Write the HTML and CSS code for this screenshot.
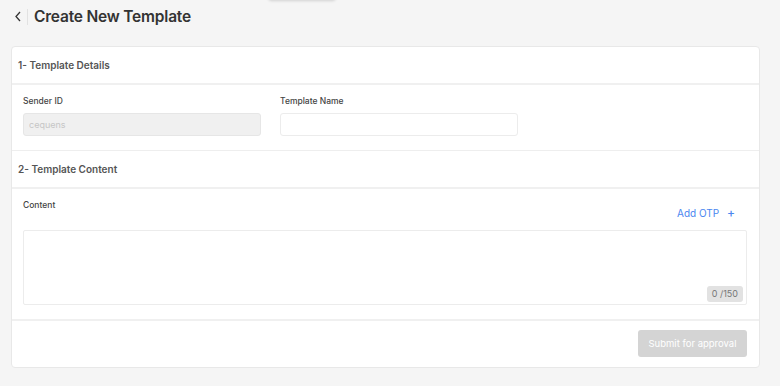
FILE: index.html
```html
<!DOCTYPE html>
<html lang="en">
<head>
  <meta charset="UTF-8">
  <meta name="viewport" content="width=device-width, initial-scale=1.0">
  <title>Create New Template</title>
  <link rel="stylesheet" href="styles.css">
</head>
<body>

  <!-- Leftover shadow of a floating tab above the page -->
  <div class="top-tab"></div>

  <!-- Page title with back arrow -->
  <div class="page-head">
    <span class="back">
      <svg width="8" height="11" viewBox="0 0 8 11"><path d="M6 1 L2 5.5 L6 10" fill="none" stroke="#333" stroke-width="1.3"/></svg>
    </span>
    <h1 class="page-title">Create New Template</h1>
  </div>

  <div class="card">
    <!-- Section 1 -->
    <div class="section-head">1- Template Details</div>
    <div class="details">
      <div class="field">
        <label>Sender ID</label>
        <input type="text" class="input disabled" placeholder="cequens" disabled>
      </div>
      <div class="field">
        <label>Template Name</label>
        <input type="text" class="input">
      </div>
    </div>

    <!-- Section 2 -->
    <div class="section-head">2- Template Content</div>
    <div class="content">
      <label class="content-label">Content</label>
      <div class="otp-row">
        <a class="add-otp">Add OTP <span class="plus">+</span></a>
      </div>
      <div class="text-box">
        <textarea></textarea>
        <span class="counter">0 /150</span>
      </div>
    </div>

    <!-- Footer -->
    <div class="card-foot">
      <button class="submit" disabled>Submit for approval</button>
    </div>
  </div>

</body>
</html>
```

FILE: styles.css
```css
body {
  margin: 0;
  background-color: #f5f5f5;
  font-family: Inter, "Noto Sans", sans-serif;
  color: #333;
}

/* Shadow of a tab hanging above the viewport */
.top-tab {
  position: absolute;
  top: -10px;
  left: 268px;
  width: 68px;
  height: 10px;
  background: #f5f5f5;
  box-shadow: 0 1px 3px rgba(0, 0, 0, 0.15);
  border-radius: 0 0 4px 4px;
}

/* Page header */
.page-head {
  display: flex;
  align-items: center;
  height: 33px;
  padding-left: 14px;
}

.back {
  display: flex;
  align-items: center;
  height: 16px;
  padding-right: 5px;
  margin-right: 6px;
  border-right: 1px solid #e2e2e2;
}

.page-title {
  margin: 0;
  font-size: 15.5px;
  font-weight: 600;
  color: #333;
  letter-spacing: -0.2px;
}

/* Card */
.card {
  margin: 13px 20px 0 11px;
  background-color: #fff;
  border: 1px solid #e8e8e8;
  border-radius: 4px;
}

.section-head {
  height: 36px;
  display: flex;
  align-items: center;
  padding-left: 6px;
  font-size: 10px;
  font-weight: 600;
  color: #555;
  border-bottom: 2px solid #f0f0f0;
}

.details {
  display: grid;
  grid-template-columns: 238px 238px;
  gap: 19px;
  padding: 10px 11px 14px;
  border-bottom: 1px solid #eeeeee;
}

.field label,
.content-label {
  display: block;
  font-size: 8.5px;
  font-weight: 500;
  color: #444;
  line-height: 12px;
  margin-bottom: 6px;
}

.input {
  box-sizing: border-box;
  display: block;
  width: 238px;
  height: 23px;
  border: 1px solid #ececec;
  border-radius: 3px;
  background: #fff;
  padding: 0 5px;
  font-family: inherit;
  font-size: 9px;
}

.input.disabled {
  background: #f0f0f0;
  border-color: #e6e6e6;
}

.input::placeholder {
  color: #c6c6c6;
}

/* Content section */
.content {
  padding: 10px 12px 14px 11px;
  border-bottom: 2px solid #f0f0f0;
}

.content-label {
  margin-bottom: 0;
}

.otp-row {
  display: flex;
  justify-content: flex-end;
  padding-right: 12px;
  margin-top: -4px;
  height: 23px;
}

.add-otp {
  font-size: 10px;
  color: #4a86f0;
  line-height: 12px;
}

.plus {
  margin-left: 5px;
  font-size: 12px;
  font-weight: 500;
  color: #4a86f0;
}

.text-box {
  position: relative;
  height: 75px;
}

.text-box textarea {
  box-sizing: border-box;
  width: 100%;
  height: 75px;
  border: 1px solid #ececec;
  border-radius: 2px;
  resize: none;
  display: block;
}

.counter {
  position: absolute;
  right: 4px;
  bottom: 3px;
  background: #e2e2e2;
  color: #777;
  font-size: 9px;
  line-height: 16px;
  padding: 0 5px;
  border-radius: 3px;
}

/* Footer */
.card-foot {
  display: flex;
  justify-content: flex-end;
  padding: 9px 12px 10px;
}

.submit {
  width: 109px;
  height: 27px;
  border: none;
  border-radius: 3px;
  background: #d4d4d4;
  color: #fff;
  font-family: inherit;
  font-size: 9.5px;
}
```
